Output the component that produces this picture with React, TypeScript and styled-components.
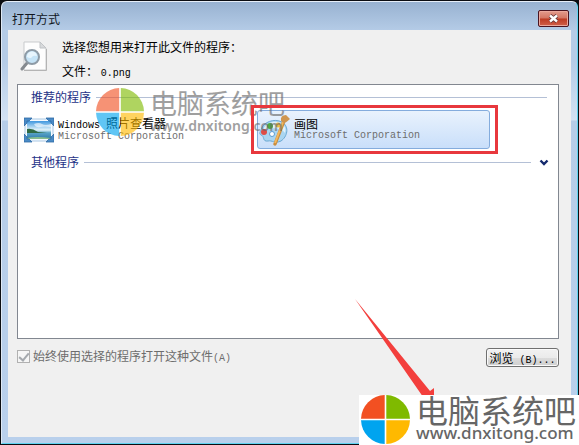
import React from "react";
import styled, { createGlobalStyle } from "styled-components";

const cjk = '"Noto Sans CJK SC", sans-serif';

const GlobalStyle = createGlobalStyle`
  * { box-sizing: border-box; }
  body { margin: 0; background: #0b0d12; font: 12px/16px ${cjk}; color: #000; }
  button, input { font: inherit; margin: 0; }
`;

const Desktop = styled.main`
  position: relative;
  display: flex;
  min-height: 100vh;
  padding: 1px;
  background: #0b0d12;
  overflow: hidden;
`;

const Window = styled.section`
  flex: 1;
  display: flex;
  flex-direction: column;
  padding: 0 6px 6px;
  border: 1px solid #5fd3f0;
  border-top-color: #e6eef8;
  border-left-color: #dfe9f5;
  border-radius: 6px 6px 0 0;
  background: linear-gradient(#98b2d1 0, #b5cce7 29px, #b5cce7 60px, #d3e2f3 118px, #b6cde8 119px, #b9d0ec 100%);
`;

const TitleBar = styled.header`
  display: flex;
  align-items: center;
  justify-content: space-between;
  height: 28px;
  padding: 5px 2px 0 4px;
`;

const Title = styled.h1`
  margin: 0;
  font: inherit;
  color: #10151c;
`;

const CloseButton = styled.button`
  display: grid;
  place-items: center;
  width: 31px;
  height: 17px;
  padding: 0;
  border: 1px solid #4a1420;
  border-radius: 2px;
  box-shadow: inset 0 0 0 1px #eba79b;
  background: linear-gradient(#e39c8d 0, #d47563 48%, #bd3a22 52%, #d0604a 100%);
`;

const Client = styled.div`
  flex: 1;
  display: flex;
  flex-direction: column;
  padding: 9px 12px 0 9px;
  background: #f0f0f0;
`;

const Intro = styled.div`
  display: flex;
  gap: 13px;
  height: 45px;
  padding-left: 3px;
`;

const IntroLines = styled.div`
  display: flex;
  flex-direction: column;
  gap: 8px;

  p { margin: 0; }
`;

const Mono = styled.span`
  font-family: "Liberation Mono", monospace;
  font-size: 10px;
  line-height: 1;
`;

const ListBox = styled.div`
  flex: 1;
  padding: 4px 6px 0 5px;
  border: 1px solid #828790;
  background: #fff;
`;

const GroupHeader = styled.div`
  display: flex;
  align-items: center;
  gap: 5px;
  height: 16px;
  padding-left: 8px;
  color: #1e3287;
`;

const Rule = styled.hr<{ $inset?: boolean }>`
  flex: 1;
  margin: 0 ${(p) => (p.$inset ? 5 : 0)}px 0 0;
  border: 0;
  border-top: 1px solid #b4c0d6;
`;

const Toggle = styled.button`
  display: grid;
  place-items: center;
  width: 16px;
  height: 16px;
  padding: 0;
  border: 0;
  background: none;
`;

const Programs = styled.div`
  display: flex;
  gap: 1px;
  height: 49px;
  padding-top: 5px;
`;

const Program = styled.button<{ $selected?: boolean }>`
  display: flex;
  align-items: center;
  gap: 4px;
  width: 233px;
  height: 39px;
  padding: 0;
  border: 1px solid ${(p) => (p.$selected ? "#84acdd" : "transparent")};
  border-radius: 3px;
  background: ${(p) => (p.$selected ? "linear-gradient(#e9f2fd, #c9dffa)" : "none")};
  text-align: left;
`;

const ProgramText = styled.span`
  display: flex;
  flex-direction: column;
  line-height: 13px;
  white-space: nowrap;
`;

const Company = styled.small`
  color: #6d6d6d;
  font: 10px/12px "Liberation Mono", monospace;
`;

const Footer = styled.footer`
  display: flex;
  align-items: flex-start;
  justify-content: space-between;
  height: 98px;
  padding-top: 9px;
`;

const Always = styled.label`
  display: flex;
  align-items: center;
  gap: 3px;
  color: #6d6d6d;
`;

const Check = styled.input`
  appearance: none;
  width: 13px;
  height: 13px;
  border: 1px solid #b1b1b1;
  background: #f6f6f6;
  display: grid;
  place-items: center;

  &:checked::after {
    content: "";
    width: 4px;
    height: 8px;
    margin-bottom: 2px;
    border: solid #a5a9ae;
    border-width: 0 2px 2px 0;
    transform: rotate(40deg);
  }
`;

const Browse = styled.button`
  width: 73px;
  height: 19px;
  padding: 0;
  border: 1px solid #707070;
  border-radius: 3px;
  box-shadow: inset 0 0 0 1px #fafafa;
  background: linear-gradient(#f2f2f2 0, #ebebeb 50%, #dddddd 51%, #cfcfcf 100%);
  line-height: 16px;
  white-space: nowrap;
`;

const Highlight = styled.div`
  position: absolute;
  left: 251px;
  top: 105px;
  width: 247px;
  height: 49px;
  border: 3px solid #e8383d;
  pointer-events: none;
`;

const Arrow = styled.svg`
  position: absolute;
  right: 143px;
  bottom: 42px;
  pointer-events: none;
`;

const Mark = styled.div<{ $corner?: boolean }>`
  position: absolute;
  display: flex;
  pointer-events: none;
  color: #666;
  ${(p) =>
    p.$corner
      ? "right: 0; bottom: 0; width: 220px; height: 50px; gap: 6px; padding: 0 0 0 2px; background: #fff;"
      : "left: 96px; top: 88px; gap: 6px; opacity: 0.62;"}

  svg { flex-shrink: 0; }
`;

const MarkText = styled.div<{ $corner?: boolean }>`
  display: flex;
  flex-direction: column;
  white-space: nowrap;

  strong {
    font-weight: 400;
    font-size: ${(p) => (p.$corner ? 32 : 27)}px;
    line-height: 29px;
  }
  span {
    font-family: "Noto Sans", sans-serif;
    font-weight: ${(p) => (p.$corner ? 500 : 600)};
    font-size: ${(p) => (p.$corner ? 17 : 14)}px;
    line-height: 18px;
  }
`;

const Disc = ({ size }: { size: number }) => (
  <svg width={size} height={size} viewBox="0 0 48 48" aria-hidden="true">
    <path d="M23.2 23.2H0A24 24 0 0 1 23.2 0Z" fill="#f25022" />
    <path d="M24.8 23.2H48A24 24 0 0 0 24.8 0Z" fill="#7fba00" />
    <path d="M23.2 24.8H0A24 24 0 0 0 23.2 48Z" fill="#00a4ef" />
    <path d="M24.8 24.8H48A24 24 0 0 1 24.8 48Z" fill="#ffb900" />
  </svg>
);

const Brand = ({ corner }: { corner?: boolean }) => (
  <Mark $corner={corner}>
    <Disc size={corner ? 49 : 48} />
    <MarkText $corner={corner}>
      <strong>电脑系统吧</strong>
      <span>www.dnxitong.com</span>
    </MarkText>
  </Mark>
);

const FileSearchIcon = () => (
  <svg width="29" height="34" viewBox="0 0 29 34" aria-hidden="true">
    <path d="M4 3H20L26 9V31H4Z" fill="#fdfdfd" stroke="#c9cbcd" />
    <path d="M20 3V9H26Z" fill="#d8dadc" stroke="#c0c3c6" />
    <path d="M4 31.5H26.5V10" fill="none" stroke="#b4b4b4" />
    <path d="M7 24L2 30" stroke="#858a8f" strokeWidth="3" strokeLinecap="round" />
    <circle cx="12" cy="18" r="7" fill="#c5e3f6" stroke="#8e9ba6" strokeWidth="2" />
    <path d="M7 18a5 5 0 0 1 10-1q-4-1-5 1t-5 0" fill="#e8f5fd" />
  </svg>
);

const PhotoIcon = () => (
  <svg width="30" height="26" viewBox="0 0 30 26" aria-hidden="true">
    <defs>
      <linearGradient id="sky" x2="0" y2="1">
        <stop stopColor="#3f97df" />
        <stop offset=".5" stopColor="#e2f3f9" />
        <stop offset=".65" stopColor="#5aa5c7" />
        <stop offset="1" stopColor="#2d79ac" />
      </linearGradient>
    </defs>
    <path d="M1 2H29V24H1Z" fill="#f5faff" stroke="#a9c8e4" />
    <path d="M3 4H27V22H3Z" fill="url(#sky)" />
    <path d="M3 12Q8 11 14 15L23 16H3Z" fill="#2f6b45" />
    <path d="M10 7q5-2 8 0t9 0v3q-7-1-11 0t-6-3" fill="#fff" opacity=".6" />
    <path d="M3 21Q12 19 27 21V22H3Z" fill="#86bd8e" />
    <path d="M0 1H8L5 4H3V6L0 9ZM30 1H22L25 4H27V6L30 9ZM0 25H8L5 22H3V20L0 17ZM30 25H22L25 22H27V20L30 17Z" fill="#4b8bc6" stroke="#2f69a5" strokeWidth=".8" />
  </svg>
);

const PaintIcon = () => (
  <svg width="32" height="32" viewBox="0 0 32 32" aria-hidden="true">
    <path d="M3 16C5 8 16 4 24 8c8 5 5 15-1 19-6 3-9-1-13 0C4 28 7 22 3 21c-2-1-1-3 0-5Z" fill="#a9d5f1" stroke="#6ba9d3" />
    <path d="M5 15C9 8 17 6 23 9c5 3 5 7 4 10-6-7-15-4-22-4Z" fill="#dff1fc" />
    <circle cx="6" cy="18" r="3" fill="#de4c46" />
    <circle cx="12" cy="12" r="3" fill="#4aaf40" />
    <circle cx="20" cy="11" r="2.5" fill="#eebf48" />
    <circle cx="14" cy="20" r="2.5" fill="#fff" stroke="#5e9dd0" />
    <path d="M26 7L17 30" stroke="#c98d3e" strokeWidth="3.4" strokeLinecap="round" />
    <path d="M25 8L17 29" stroke="#f2b75e" strokeWidth="2" />
    <path d="M23 7Q22 1 28 1L32 5Q29 8 26 9Z" fill="#cf9650" />
  </svg>
);

export default function App() {
  return (
    <Desktop>
      <GlobalStyle />
      <Window>
        <TitleBar>
          <Title>打开方式</Title>
          <CloseButton aria-label="关闭">
            <svg width="11" height="9" viewBox="0 0 11 9" aria-hidden="true">
              <path d="M2 1.5L9 7.5M9 1.5L2 7.5" stroke="#5f3438" strokeWidth="4" />
              <path d="M2 1.5L9 7.5M9 1.5L2 7.5" stroke="#fff" strokeWidth="2.4" />
            </svg>
          </CloseButton>
        </TitleBar>
        <Client>
          <Intro>
            <FileSearchIcon />
            <IntroLines>
              <p>选择您想用来打开此文件的程序：</p>
              <p>文件： <Mono>0.png</Mono></p>
            </IntroLines>
          </Intro>
          <ListBox>
            <GroupHeader>推荐的程序<Rule $inset /></GroupHeader>
            <Programs>
              <Program>
                <PhotoIcon />
                <ProgramText>
                  <span><Mono>Windows </Mono>照片查看器</span>
                  <Company>Microsoft Corporation</Company>
                </ProgramText>
              </Program>
              <Program $selected>
                <PaintIcon />
                <ProgramText>
                  <span>画图</span>
                  <Company>Microsoft Corporation</Company>
                </ProgramText>
              </Program>
            </Programs>
            <GroupHeader>
              其他程序<Rule />
              <Toggle aria-label="展开其他程序">
                <svg width="10" height="7" viewBox="0 0 10 7" aria-hidden="true">
                  <path d="M1.5 1.5L5 5L8.5 1.5" fill="none" stroke="#14296d" strokeWidth="2.4" />
                </svg>
              </Toggle>
            </GroupHeader>
          </ListBox>
          <Footer>
            <Always>
              <Check type="checkbox" defaultChecked disabled />
              <span>始终使用选择的程序打开这种文件<Mono>(A)</Mono></span>
            </Always>
            <Browse>浏览<Mono> (B)...</Mono></Browse>
          </Footer>
        </Client>
      </Window>
      <Brand />
      <Highlight />
      <Arrow width="82" height="104" viewBox="0 0 82 104" aria-hidden="true">
        <path d="M1 0L76 92L80 89V104H73L67 95Z" fill="#f33f3d" />
      </Arrow>
      <Brand corner />
    </Desktop>
  );
}
